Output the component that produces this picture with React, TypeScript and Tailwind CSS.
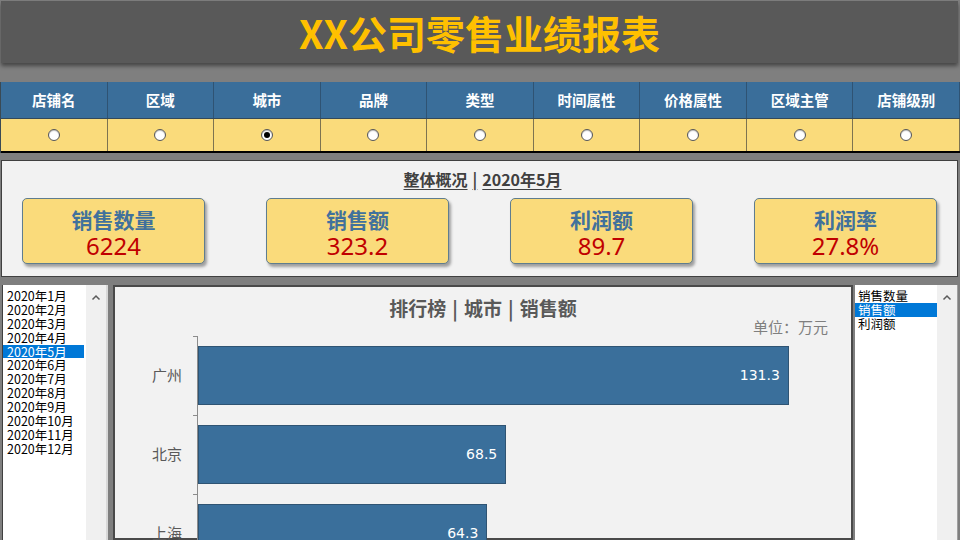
import React from "react";

const tabs = ["店铺名", "区域", "城市", "品牌", "类型", "时间属性", "价格属性", "区域主管", "店铺级别"];
const kpis: [string, string][] = [
  ["销售数量", "6224"],
  ["销售额", "323.2"],
  ["利润额", "89.7"],
  ["利润率", "27.8%"],
];
const months = Array.from({ length: 12 }, (_, i) => `2020年${i + 1}月`);
const bars: [string, number][] = [
  ["广州", 131.3],
  ["北京", 68.5],
  ["上海", 64.3],
];
const metrics = ["销售数量", "销售额", "利润额"];

function Chevron() {
  return (
    <svg width="10" height="7" viewBox="0 0 10 7">
      <path d="M1.5 5.5 L5 2 L8.5 5.5" stroke="#5a5a5a" strokeWidth="1.5" fill="none" />
    </svg>
  );
}

function Radio({ checked }: { checked: boolean }) {
  return (
    <div className="w-[12px] h-[12px] rounded-full border border-[#555] bg-white flex items-center justify-center shadow-[inset_0_1px_1px_rgba(0,0,0,0.25)]">
      {checked && <div className="w-[6px] h-[6px] rounded-full bg-black" />}
    </div>
  );
}

export default function App() {
  return (
    <div className="w-[960px] h-[540px] overflow-hidden bg-[#7f7f7f] flex flex-col font-['Noto_Sans_CJK_SC',sans-serif]">
      {/* Title */}
      <div className="mt-[1px] ml-[1px] mr-[2px] h-[62px] bg-[#595959] shadow-[0_3px_4px_rgba(0,0,0,0.45)] flex items-center justify-center shrink-0">
        <span className="text-[39px] font-bold text-[#FFC000] leading-none">XX公司零售业绩报表</span>
      </div>

      {/* Filter table */}
      <div className="mt-[19px] shrink-0 border-l border-[#3a4a55]">
        <div className="grid grid-cols-9 h-[37px] bg-[#3A6E9A] border-b border-[#34495a]">
          {tabs.map((t) => (
            <div key={t} className="flex items-center justify-center border-r border-[#2f5373] text-white text-[14.5px] font-bold">
              {t}
            </div>
          ))}
        </div>
        <div className="grid grid-cols-9 h-[34px] bg-[#FADB7B] border-b-2 border-black">
          {tabs.map((t) => (
            <div key={t} className="flex items-center justify-center border-r border-[#7d7350]">
              <Radio checked={t === "城市"} />
            </div>
          ))}
        </div>
      </div>

      {/* Overview */}
      <div className="mt-[7px] ml-[1px] mr-[2px] h-[117px] shrink-0 bg-[#F2F2F2] border border-[#404040] flex flex-col">
        <div className="mt-[8px] h-[20px] leading-[20px] text-center text-[16px] font-bold text-[#404040] pl-[6px]">
          <span className="underline underline-offset-[3px]">
            整体概况<span className="mx-[5px]">|</span>2020年5月
          </span>
        </div>
        <div className="mt-[9px] px-[20px] flex justify-between">
          {kpis.map(([label, value]) => (
            <div
              key={label}
              className="w-[183px] h-[66px] bg-[#FADB7B] border border-[#5f7d8f] rounded-[5px] shadow-[2px_3px_3px_rgba(0,0,0,0.35)] flex flex-col items-center pt-[7px]"
            >
              <div className="text-[21px] font-bold text-[#41719C] leading-[26px]">{label}</div>
              <div className="text-[24px] text-[#C00000] leading-[28px] font-['Noto_Sans','Noto_Sans_CJK_SC',sans-serif]">
                {value}
              </div>
            </div>
          ))}
        </div>
      </div>

      {/* Bottom area */}
      <div className="mt-[8px] flex-1 min-h-0 flex">
        {/* Month list */}
        <div className="ml-[2px] w-[106px] flex bg-white border-l border-[#404040]">
          <div className="flex-1 pt-[4px] pr-[2px]">
            {months.map((m) => (
              <div
                key={m}
                className={
                  m === "2020年5月"
                    ? "pl-[4px] h-[13.9px] leading-[13.9px] text-[12.5px] bg-[#0078D7] text-white"
                    : "pl-[4px] h-[13.9px] leading-[13.9px] text-[12.5px] text-black"
                }
              >
                {m}
              </div>
            ))}
          </div>
          <div className="w-[20px] bg-[#F0F0F0] flex justify-center pt-[9px]">
            <div>
              <Chevron />
            </div>
          </div>
          <div className="w-[2px] bg-[#d8d8d8]" />
        </div>

        {/* Chart */}
        <div className="ml-[5px] flex-1 bg-[#F2F2F2] border-2 border-[#4a4a4a] flex flex-col">
          <div className="mt-[10px] h-[22px] leading-[22px] text-center text-[19px] font-bold text-[#595959]">
            排行榜<span className="mx-[6px]">|</span>城市<span className="mx-[6px]">|</span>销售额
          </div>
          <div className="h-[16px] leading-[16px] text-right pr-[23px] text-[15px] text-[#7f7f7f]">单位：万元</div>
          <div className="mt-[1px] flex flex-col">
            {bars.map(([city, v]) => (
              <div key={city} className="flex h-[79px]">
                <div className="w-[78px] pr-[11px] flex items-center justify-end text-[15px] text-[#595959]">{city}</div>
                <div className="w-[4px]">
                  <div className="h-px bg-[#8c8c8c]" />
                </div>
                <div className="flex-1 border-l border-[#8c8c8c] py-[10px]">
                  <div
                    className="h-full bg-[#3A6F9B] border border-[#2f5473] flex items-center justify-end pr-[8px] text-white text-[14px] font-['DejaVu_Sans',sans-serif]"
                    style={{ width: `${v * 4.5}px` }}
                  >
                    {v.toFixed(1)}
                  </div>
                </div>
              </div>
            ))}
          </div>
        </div>

        {/* Metric list */}
        <div className="ml-[2px] mr-[2px] w-[103px] flex bg-white border-r border-[#a0a0a0]">
          <div className="flex-1 pt-[4px]">
            {metrics.map((m) => (
              <div
                key={m}
                className={
                  m === "销售额"
                    ? "pl-[3px] h-[13.9px] leading-[13.9px] text-[12.5px] bg-[#0078D7] text-white"
                    : "pl-[3px] h-[13.9px] leading-[13.9px] text-[12.5px] text-black"
                }
              >
                {m}
              </div>
            ))}
          </div>
          <div className="w-[20px] bg-[#F0F0F0] flex justify-center pt-[9px]">
            <div>
              <Chevron />
            </div>
          </div>
        </div>
      </div>
    </div>
  );
}
